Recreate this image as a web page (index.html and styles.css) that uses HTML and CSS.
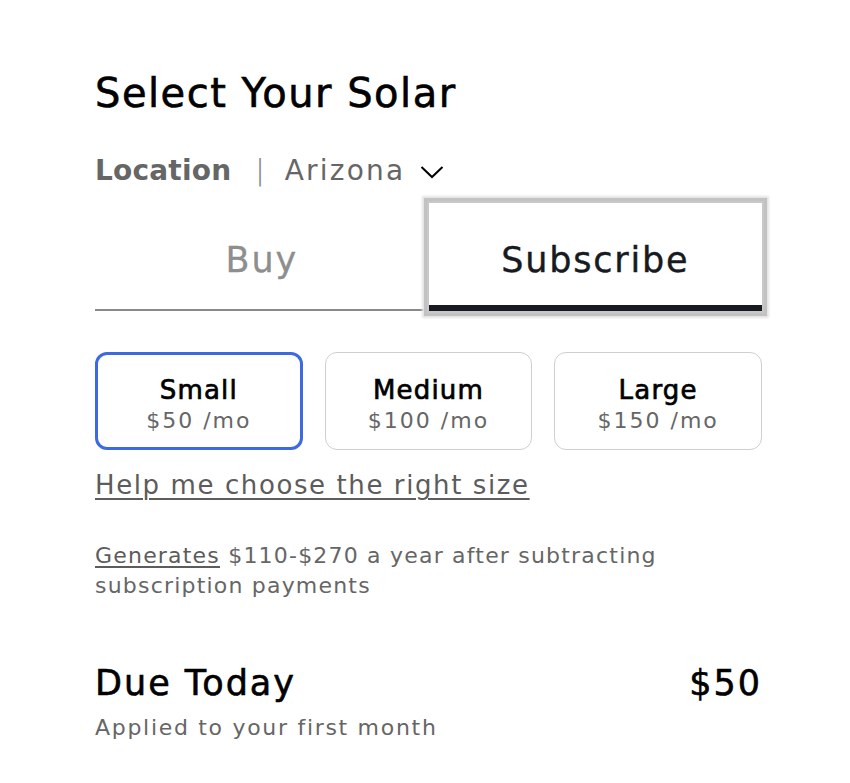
FILE: index.html
```html
<!DOCTYPE html>
<html lang="en">
<head>
<meta charset="utf-8">
<title>Select Your Solar</title>
<link rel="stylesheet" href="styles.css">
</head>
<body>
<main class="panel">
  <h1 class="title">Select Your Solar</h1>
  <div class="location">
    <span class="loc-label">Location</span>
    <span class="loc-sep">|</span>
    <span class="loc-value">Arizona</span>
    <svg class="chev" width="24" height="14" viewBox="0 0 24 14" aria-hidden="true"><path d="M1.5 2 L12 12 L22.5 2" fill="none" stroke="#000" stroke-width="2"/></svg>
  </div>
  <div class="tabs">
    <div class="tab">Buy</div>
    <div class="tab tab-active">Subscribe</div>
  </div>
  <div class="sizes">
    <div class="size size-selected"><span class="size-name">Small</span><span class="size-price">$50 /mo</span></div>
    <div class="size"><span class="size-name">Medium</span><span class="size-price">$100 /mo</span></div>
    <div class="size"><span class="size-name">Large</span><span class="size-price">$150 /mo</span></div>
  </div>
  <a class="help" href="#">Help me choose the right size</a>
  <p class="generates"><a href="#" class="gen-link">Generates</a> $110-$270 a year after subtracting subscription payments</p>
  <div class="due">
    <span class="due-label">Due Today</span>
    <span class="due-amount">$50</span>
  </div>
  <p class="applied">Applied to your first month</p>
</main>
</body>
</html>
```

FILE: styles.css
```css
* { box-sizing: border-box; }
html, body { margin: 0; padding: 0; background: #fff; }
body {
  font-family: "DejaVu Sans", "Open Sans", sans-serif;
  color: #000;
}
.panel {
  width: 667px;
  margin-left: 95px;
  padding-top: 62px;
}
.title {
  margin: 0;
  height: 62px;
  line-height: 62px;
  font-size: 40px;
  font-weight: 400;
  letter-spacing: 1.5px;
  -webkit-text-stroke: 0.6px #000;
  color: #000;
}
.location {
  display: flex;
  align-items: center;
  height: 56px;
  margin-top: 18px;
  font-size: 28px;
  color: #6b6b6b;
}
.loc-label { font-weight: 700; color: #666; letter-spacing: 0.2px; }
.loc-sep { margin: 0 20px 0 24px; color: #777; font-weight: 300; }
.loc-value { color: #666; letter-spacing: 2.2px; }
.chev { margin-left: 15px; margin-top: 4px; }
.tabs {
  display: flex;
  margin-top: 5px;
  height: 108px;
}
.tab {
  flex: 1;
  display: flex;
  align-items: center;
  justify-content: center;
  font-size: 35px;
  letter-spacing: 1.8px;
  color: #8e8e8e;
  -webkit-text-stroke: 0.3px #8e8e8e;
  border-bottom: 2px solid #8a8a8a;
  padding-top: 8px;
}
.tab-active {
  color: #171a20;
  -webkit-text-stroke: 0.4px #171a20;
  border-bottom: 6px solid #171a20;
  padding-top: 12px;
  box-shadow: 0 0 0 2px #c8c8c8, 0 0 0 5px #c2c2c2, 0 0 2px 7px #e4e4e4;
}
.sizes {
  display: grid;
  grid-template-columns: repeat(3, 1fr);
  gap: 22px;
  margin-top: 41px;
}
.size {
  height: 98px;
  border: 1.5px solid #cfcfcf;
  border-radius: 12px;
  display: flex;
  flex-direction: column;
  align-items: center;
  justify-content: center;
  padding-top: 8px;
}
.size-selected {
  border: 3.5px solid #3e6ae1;
}
.size-name {
  font-size: 26px;
  font-weight: 400;
  letter-spacing: 1.2px;
  -webkit-text-stroke: 0.7px #000;
  color: #000;
  line-height: 32px;
}
.size-price {
  font-size: 22px;
  letter-spacing: 2px;
  color: #666;
  line-height: 30px;
}
.help {
  display: block;
  margin-top: 17px;
  font-size: 26px;
  letter-spacing: 1.6px;
  line-height: 36px;
  color: #5c5c5c;
  text-decoration: underline;
  text-decoration-thickness: 2px;
  text-underline-offset: 4px;
}
.generates {
  margin: 38px 0 0;
  font-size: 22px;
  letter-spacing: 1.2px;
  line-height: 30px;
  color: #666;
  width: 640px;
}
.gen-link { color: #5c5c5c; text-decoration: underline; text-underline-offset: 3px; }
.due {
  display: flex;
  justify-content: space-between;
  align-items: center;
  margin-top: 60px;
  height: 44px;
  font-size: 35px;
  letter-spacing: 2px;
  -webkit-text-stroke: 0.6px #000;
  color: #000;
}
.applied {
  margin: 8px 0 0;
  font-size: 22px;
  letter-spacing: 1.7px;
  line-height: 30px;
  color: #666;
}
```
